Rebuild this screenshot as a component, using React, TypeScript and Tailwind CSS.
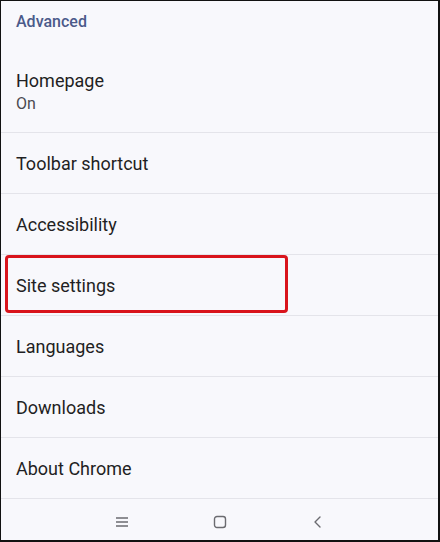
import React from 'react';

type Row = {
    title: string;
    subtitle?: string;
    highlighted?: boolean;
}

const rows: Row[] = [
    { title: "Toolbar shortcut" },
    { title: "Accessibility" },
    { title: "Site settings", highlighted: true },
    { title: "Languages" },
    { title: "Downloads" },
    { title: "About Chrome" },
];

function SettingRow({ title, highlighted }: Row) {
    return (
        <div className="relative h-[61px] border-t border-[#e4e4ea] flex items-center px-[15px]">
            {highlighted && (
                <div className="absolute left-[4px] top-0 w-[283px] h-[58px] border-[3px] border-[#d9141c] rounded-[4px]"></div>
            )}
            <span className="text-[18px] text-[#1f1f23]">{title}</span>
        </div>
    )
}

export default function App() {
    return (
        <div className="w-[440px] h-[542px] bg-[#f8f8fc] border-t border-l border-r-2 border-b-2 border-[#111] flex flex-col overflow-hidden" style={{ fontFamily: 'Roboto, "Noto Sans", sans-serif' }}>
            <div className="h-[41px] px-[15px] flex items-center">
                <span className="text-[16px] font-medium text-[#4b5a8a]">Advanced</span>
            </div>

            <div className="h-[90px] px-[15px] pt-[27px]">
                <div className="text-[18px] leading-[24px] text-[#1f1f23]">Homepage</div>
                <div className="text-[16px] leading-[20px] mt-[1px] text-[#4a4a50]">On</div>
            </div>

            {rows.map((row) => (
                <SettingRow key={row.title} {...row} />
            ))}

            {/* system navigation bar */}
            <div className="flex-1 border-t border-[#e4e4ea] flex items-center justify-center gap-[84px] pt-[4px]">
                <svg width="14" height="12" viewBox="0 0 14 12" fill="none" stroke="#6b6b70" strokeWidth="1.3">
                    <path d="M1 2h12M1 6h12M1 10h12" />
                </svg>
                <svg width="14" height="14" viewBox="0 0 14 14" fill="none" stroke="#6b6b70" strokeWidth="1.4">
                    <rect x="1.5" y="1.5" width="11" height="11" rx="2.5" />
                </svg>
                <svg width="14" height="14" viewBox="0 0 14 14" fill="none" stroke="#6b6b70" strokeWidth="1.4" strokeLinecap="round" strokeLinejoin="round">
                    <path d="M9 2L4 7l5 5" />
                </svg>
            </div>
        </div>
    )
}
